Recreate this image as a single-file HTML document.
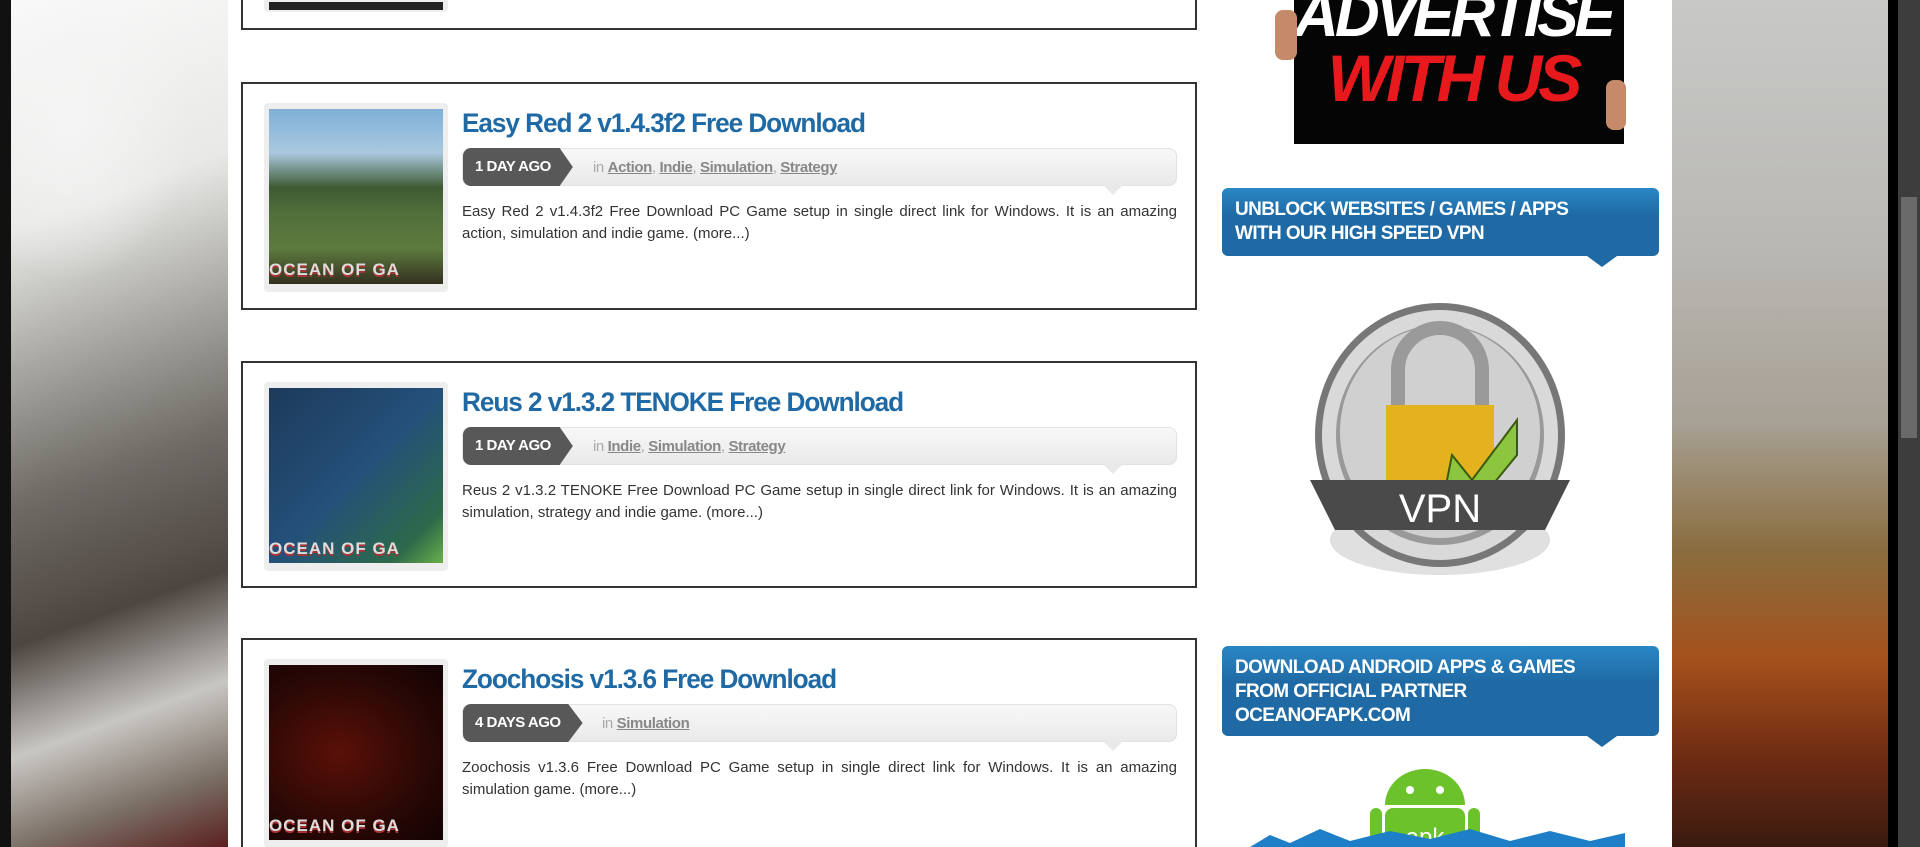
<!DOCTYPE html>
<html><head><meta charset="utf-8"><style>
*{margin:0;padding:0;box-sizing:border-box}
html,body{width:1920px;height:847px;overflow:hidden}
body{background:#fff;font-family:"Liberation Sans",sans-serif}
#w{position:relative;width:1920px;height:847px;overflow:hidden}
.lbg{position:absolute;left:0;top:0;width:228px;height:847px;background:
radial-gradient(ellipse 120px 160px at 60px 120px,#f4f4f4,transparent),
linear-gradient(160deg,#fafafa 0%,#e8e8e6 25%,#a9a8a2 40%,#6e6a65 55%,#4d4540 70%,#c9c7c3 82%,#7a6e64 92%,#5a2020 100%);border-left:11px solid #111}
.rbg{position:absolute;left:1672px;top:0;width:216px;height:847px;background:linear-gradient(180deg,#c8c9c7 0%,#b9b7b3 30%,#a7a094 50%,#8a6d3e 65%,#a5501c 78%,#6b2a12 90%,#3a1a10 100%)}
.blk{position:absolute;left:1888px;top:0;width:10px;height:847px;background:#000}
.sb{position:absolute;left:1898px;top:0;width:22px;height:847px;background:#3d3d3d}
.sb i{position:absolute;left:3px;top:197px;width:16px;height:241px;background:#6a6a6a}
.post{position:absolute;left:241px;width:956px;border:2px solid #333;background:#fff}
.th{position:absolute;left:21px;top:19px;width:184px;height:189px;background:#eee;border-radius:4px}
.th div{position:absolute;left:5px;top:6px;width:174px;height:175px}
.th b{position:absolute;left:5px;bottom:12px;width:174px;font:bold 17px "Liberation Sans",sans-serif;color:#ddd;letter-spacing:1px;text-shadow:0 2px 0 #a33;white-space:nowrap;overflow:hidden}
h2{position:absolute;left:219px;top:24px;font:bold 27px "Liberation Sans",sans-serif;color:#1f6aa5;letter-spacing:-1.1px;white-space:nowrap;transform:scaleX(.97);transform-origin:left}
.meta{position:absolute;left:219px;top:64px;width:715px;height:38px;background:linear-gradient(#f8f8f8,#e9e9e9);border-radius:8px;border:1px solid #e2e2e2}
.meta .d{position:absolute;left:0;top:-1px;height:38px;padding:0 22px 0 12px;background:#585858;color:#fff;font:bold 15px "Liberation Sans",sans-serif;letter-spacing:-.5px;line-height:38px;border-radius:8px 0 0 8px;clip-path:polygon(0 0,88% 0,100% 50%,88% 100%,0 100%)}
.meta .c{position:absolute;top:0;line-height:37px;font-size:15px;color:#aaa;letter-spacing:-.4px}
.meta .c u{color:#888;font-weight:bold}
.meta:after{content:"";position:absolute;left:640px;bottom:-10px;border:10px solid transparent;border-top-color:#e9e9e9;border-bottom:0}
.desc{position:absolute;left:219px;top:117px;width:715px;font:15px/22px "Liberation Sans",sans-serif;letter-spacing:0;color:#333;text-align:justify}
.wh{position:absolute;left:1222px;width:437px;background:linear-gradient(#2a87c5,#1f6aa5 40%);border-radius:6px;color:#fff;font:bold 19px/24px "Liberation Sans",sans-serif;letter-spacing:-.6px;padding:10px 13px}
.wh:after{content:"";position:absolute;left:365px;bottom:-11px;border:15px solid transparent;border-top:11px solid #1f6aa5;border-bottom:0}
</style></head><body><div id="w">
<div class="lbg"></div><div class="rbg"></div><div class="blk"></div><div class="sb"><i></i></div>

<div class="post" style="top:-40px;height:70px"><div class="th" style="top:0;height:50px"><div style="top:40px;height:8px;background:#222"></div></div></div>

<div class="post" style="top:82px;height:228px">
<div class="th"><div style="background:linear-gradient(#7fb0d8 0%,#a9c8df 25%,#3e5a33 45%,#51703a 60%,#5d7a3e 80%,#33301f 100%)"></div><b>OCEAN OF GA</b></div>
<h2>Easy Red 2 v1.4.3f2 Free Download</h2>
<div class="meta"><span class="d">1 DAY AGO</span><span class="c" style="left:130px">in <u>Action</u>, <u>Indie</u>, <u>Simulation</u>, <u>Strategy</u></span></div>
<div class="desc">Easy Red 2 v1.4.3f2 Free Download PC Game setup in single direct link for Windows. It is an amazing action, simulation and indie game. (more...)</div>
</div>

<div class="post" style="top:361px;height:227px">
<div class="th"><div style="background:linear-gradient(135deg,#1d3a5a,#24507a 50%,#2c6a4a 85%,#6ab04a)"></div><b>OCEAN OF GA</b></div>
<h2>Reus 2 v1.3.2 TENOKE Free Download</h2>
<div class="meta"><span class="d">1 DAY AGO</span><span class="c" style="left:130px">in <u>Indie</u>, <u>Simulation</u>, <u>Strategy</u></span></div>
<div class="desc">Reus 2 v1.3.2 TENOKE Free Download PC Game setup in single direct link for Windows. It is an amazing simulation, strategy and indie game. (more...)</div>
</div>

<div class="post" style="top:638px;height:240px">
<div class="th"><div style="background:radial-gradient(ellipse at 40% 50%,#5a1008,#2a0805 60%,#120303)"></div><b>OCEAN OF GA</b></div>
<h2>Zoochosis v1.3.6 Free Download</h2>
<div class="meta"><span class="d">4 DAYS AGO</span><span class="c" style="left:139px">in <u>Simulation</u></span></div>
<div class="desc">Zoochosis v1.3.6 Free Download PC Game setup in single direct link for Windows. It is an amazing simulation game. (more...)</div>
</div>

<div style="position:absolute;left:1272px;top:0;width:362px;height:144px;background:#050505;overflow:hidden">
<div style="position:absolute;left:0;top:-14px;width:100%;text-align:center;font:italic bold 62px/60px 'Liberation Sans',sans-serif;letter-spacing:-4px;color:#fff">ADVERTISE</div>
<div style="position:absolute;left:0;top:48px;width:100%;text-align:center;font:italic bold 66px/60px 'Liberation Sans',sans-serif;letter-spacing:-4px;color:#e8191c">WITH US</div>
<div style="position:absolute;left:0;top:0;width:22px;height:144px;background:#fff"></div>
<div style="position:absolute;left:3px;top:10px;width:22px;height:50px;background:#c58a6a;border-radius:8px"></div>
<div style="position:absolute;right:0;top:0;width:10px;height:144px;background:#fff"></div>
<div style="position:absolute;right:8px;top:80px;width:20px;height:50px;background:#c58a6a;border-radius:8px"></div>
</div>

<div class="wh" style="top:188px;height:68px">UNBLOCK WEBSITES / GAMES / APPS<br>WITH OUR HIGH SPEED VPN</div>

<svg style="position:absolute;left:1300px;top:300px" width="280" height="290" viewBox="0 0 280 290">
<ellipse cx="140" cy="240" rx="110" ry="35" fill="#ccc" opacity=".6"/>
<ellipse cx="140" cy="135" rx="125" ry="132" fill="#777"/>
<ellipse cx="140" cy="135" rx="118" ry="125" fill="#d9d9d9"/>
<ellipse cx="140" cy="135" rx="104" ry="110" fill="#999"/>
<ellipse cx="140" cy="132" rx="100" ry="106" fill="#d0d0d0"/>
<path d="M98 110 V70 a42 42 0 0 1 84 0 V110" fill="none" stroke="#9a9a9a" stroke-width="14"/>
<rect x="86" y="105" width="108" height="90" fill="#e3b21c"/>
<path d="M152 155 l20 25 l45 -60 v35 l-45 55 l-25 -30z" fill="#8cc63f" stroke="#3a5a10" stroke-width="2"/>
<path d="M10 180 h260 l-25 50 h-210z" fill="#4a4a4a"/>
<text x="140" y="222" text-anchor="middle" font-family="Liberation Sans" font-size="40" fill="#fff">VPN</text>
</svg>

<div class="wh" style="top:646px;height:90px">DOWNLOAD ANDROID APPS &amp; GAMES<br>FROM OFFICIAL PARTNER<br>OCEANOFAPK.COM</div>

<svg style="position:absolute;left:1250px;top:765px" width="380" height="82" viewBox="0 0 380 82">
<path d="M135 40 a40 36 0 0 1 80 0z" fill="#6cc22b"/>
<circle cx="160" cy="25" r="4" fill="#fff"/><circle cx="190" cy="25" r="4" fill="#fff"/>
<rect x="135" y="43" width="80" height="50" rx="8" fill="#6cc22b"/>
<rect x="120" y="43" width="12" height="40" rx="6" fill="#6cc22b"/>
<rect x="218" y="43" width="12" height="40" rx="6" fill="#6cc22b"/>
<text x="175" y="80" text-anchor="middle" font-family="Liberation Sans" font-size="24" fill="#fff">apk</text>
<path d="M0 82 L20 70 L40 78 L70 64 L100 76 L140 66 L180 74 L220 64 L260 76 L300 66 L340 76 L375 68 V82z" fill="#1e7fc8"/>
</svg>
</div></body></html>
